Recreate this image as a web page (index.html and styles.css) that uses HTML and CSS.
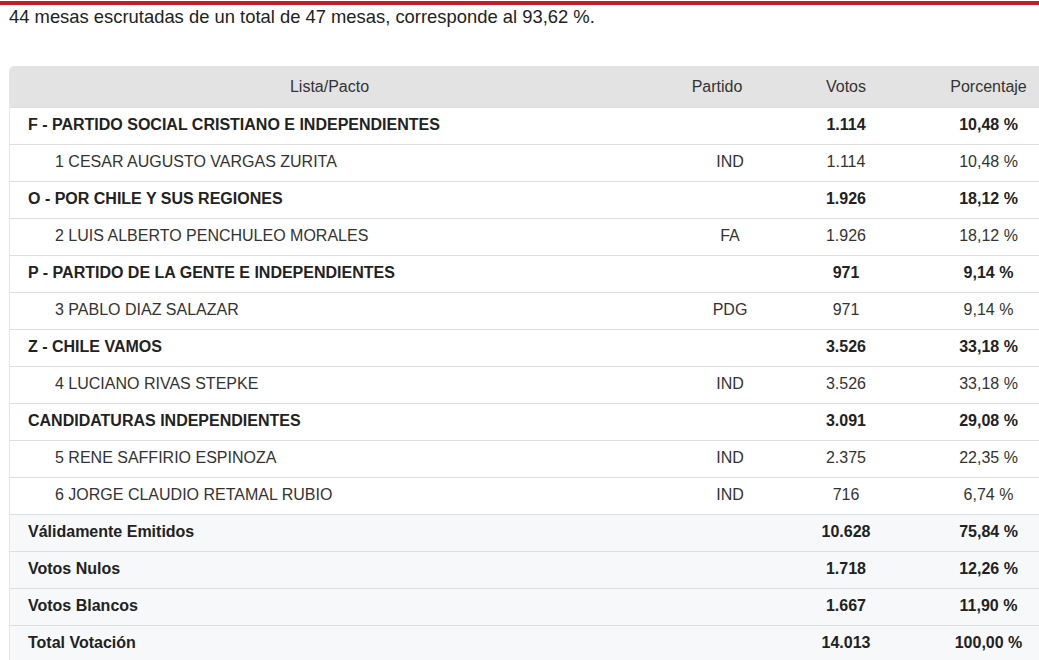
FILE: index.html
```html
<!DOCTYPE html>
<html lang="es">
<head>
<meta charset="utf-8">
<link rel="stylesheet" href="styles.css">
</head>
<body>
<div class="topbar"></div>
<p class="summary">44 mesas escrutadas de un total de 47 mesas, corresponde al 93,62 %.</p>
<div class="card">
<table class="results">
<colgroup>
<col class="c-lista"><col class="c-partido"><col class="c-votos"><col class="c-pct">
</colgroup>
<thead>
<tr><th>Lista/Pacto</th><th class="h-partido">Partido</th><th>Votos</th><th>Porcentaje</th></tr>
</thead>
<tbody>
<tr class="lista"><td class="name">F - PARTIDO SOCIAL CRISTIANO E INDEPENDIENTES</td><td class="partido"></td><td class="num">1.114</td><td class="num">10,48 %</td></tr>
<tr class="cand"><td class="name">1 CESAR AUGUSTO VARGAS ZURITA</td><td class="partido">IND</td><td class="num">1.114</td><td class="num">10,48 %</td></tr>
<tr class="lista"><td class="name">O - POR CHILE Y SUS REGIONES</td><td class="partido"></td><td class="num">1.926</td><td class="num">18,12 %</td></tr>
<tr class="cand"><td class="name">2 LUIS ALBERTO PENCHULEO MORALES</td><td class="partido">FA</td><td class="num">1.926</td><td class="num">18,12 %</td></tr>
<tr class="lista"><td class="name">P - PARTIDO DE LA GENTE E INDEPENDIENTES</td><td class="partido"></td><td class="num">971</td><td class="num">9,14 %</td></tr>
<tr class="cand"><td class="name">3 PABLO DIAZ SALAZAR</td><td class="partido">PDG</td><td class="num">971</td><td class="num">9,14 %</td></tr>
<tr class="lista"><td class="name">Z - CHILE VAMOS</td><td class="partido"></td><td class="num">3.526</td><td class="num">33,18 %</td></tr>
<tr class="cand"><td class="name">4 LUCIANO RIVAS STEPKE</td><td class="partido">IND</td><td class="num">3.526</td><td class="num">33,18 %</td></tr>
<tr class="lista"><td class="name">CANDIDATURAS INDEPENDIENTES</td><td class="partido"></td><td class="num">3.091</td><td class="num">29,08 %</td></tr>
<tr class="cand"><td class="name">5 RENE SAFFIRIO ESPINOZA</td><td class="partido">IND</td><td class="num">2.375</td><td class="num">22,35 %</td></tr>
<tr class="cand"><td class="name">6 JORGE CLAUDIO RETAMAL RUBIO</td><td class="partido">IND</td><td class="num">716</td><td class="num">6,74 %</td></tr>
</tbody>
<tfoot>
<tr><td class="name">Válidamente Emitidos</td><td></td><td class="num">10.628</td><td class="num">75,84 %</td></tr>
<tr><td class="name">Votos Nulos</td><td></td><td class="num">1.718</td><td class="num">12,26 %</td></tr>
<tr><td class="name">Votos Blancos</td><td></td><td class="num">1.667</td><td class="num">11,90 %</td></tr>
<tr><td class="name">Total Votación</td><td></td><td class="num">14.013</td><td class="num">100,00 %</td></tr>
</tfoot>
</table>
</div>
</body>
</html>
```
FILE: styles.css
```css
html, body {
  margin: 0;
  padding: 0;
  overflow: hidden;
  background: #ffffff;
}
body {
  font-family: "Liberation Sans", Arial, sans-serif;
  font-size: 16px;
  color: #333333;
}
.topbar {
  margin-top: 1px;
  height: 4px;
  background: #bf2026;
}
.summary {
  margin: 0 0 0 9px;
  font-size: 18.4px;
  line-height: 22px;
  padding-top: 1px;
  color: #222222;
}
.card {
  margin: 38px 0 0 9px;
  width: 1060px;
  border-left: 1px solid #e6e6e6;
  border-radius: 5px 0 0 0;
  overflow: hidden;
}
.results {
  width: 1060px;
  table-layout: fixed;
  border-collapse: collapse;
}
.c-lista { width: 639px; }
.c-partido { width: 136px; }
.c-votos { width: 122px; }
.c-pct { width: 163px; }
.results th {
  background: #e3e3e3;
  font-weight: normal;
  color: #333333;
  text-align: center;
  line-height: 20px;
  padding: 11px 0 10px;
}
.results td {
  line-height: 20px;
  padding: 7px 0 9px;
  border-top: 1px solid #dedede;
  text-align: center;
}
.results td.name {
  text-align: left;
  padding-left: 18px;
}
.results tr.cand td.name {
  padding-left: 45px;
}
.results td.partido {
  padding-left: 26px;
}
.results tr.lista td,
.results tfoot td {
  font-weight: bold;
  color: #222222;
}
.results tfoot td {
  background: #f7f8fa;
}
```
